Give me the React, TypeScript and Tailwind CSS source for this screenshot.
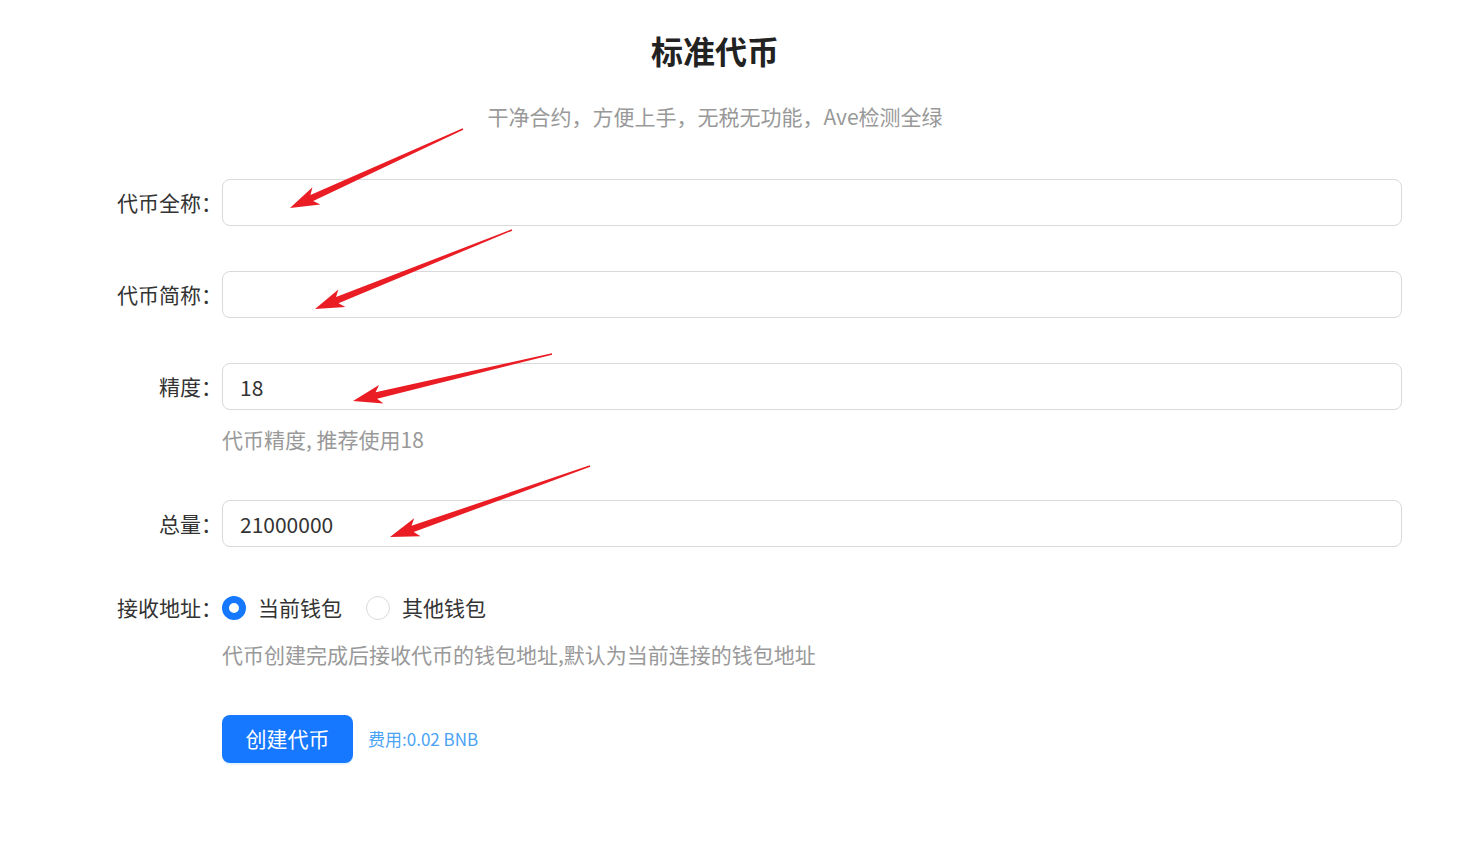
import React, { useState } from "react";

const font = { fontFamily: '"Noto Sans CJK SC", "Noto Sans", sans-serif' };

type Pt = [number, number];

function arrowPoints(tail: Pt, tip: Pt) {
  const dx = tip[0] - tail[0];
  const dy = tip[1] - tail[1];
  const len = Math.hypot(dx, dy);
  const ux = dx / len;
  const uy = dy / len;
  const nx = -uy;
  const ny = ux;
  const head = 24;
  const neck: Pt = [tip[0] - ux * head, tip[1] - uy * head];
  const barb: Pt = [tip[0] - ux * (head + 5), tip[1] - uy * (head + 5)];
  const p = (base: Pt, w: number): string => `${base[0] + nx * w},${base[1] + ny * w}`;
  return [
    p(tail, 0.7),
    p(neck, 3.3),
    p(barb, 9.5),
    `${tip[0]},${tip[1]}`,
    p(barb, -9.5),
    p(neck, -3.3),
    p(tail, -0.7),
  ].join(" ");
}

const arrows: [Pt, Pt][] = [
  [[463, 129], [290, 208]],
  [[512, 230], [315, 309]],
  [[552, 354], [353, 401]],
  [[590, 466], [390, 537]],
];

function Field({ label, value, children }: { label: string; value?: string; children?: React.ReactNode }) {
  return (
    <div className="flex flex-col">
      <div className="flex items-center">
        <label className="w-[222px] shrink-0 text-right text-[21px] text-[#333]">{label}：</label>
        <input
          defaultValue={value}
          className="h-[47px] w-[1180px] rounded-[8px] border border-[#d9d9d9] bg-white px-[17px] text-[21px] text-[#333] outline-none"
          style={font}
        />
      </div>
      {children}
    </div>
  );
}

function Radio({ checked }: { checked: boolean }) {
  return (
    <span
      className={
        checked
          ? "h-[24px] w-[24px] rounded-full border-[7px] border-[#1677ff] bg-white"
          : "h-[24px] w-[24px] rounded-full border border-[#d9d9d9] bg-white"
      }
    />
  );
}

export default function App() {
  const [receiver, setReceiver] = useState("current");

  return (
    <div className="relative min-h-[849px] w-[1473px] bg-white" style={font}>
      <div className="w-[1430px] pt-[28px] text-center">
        <h1 className="text-[32px] font-bold leading-[44px] text-[#222]">标准代币</h1>
        <p className="mt-[30px] text-[21px] leading-[28px] text-[#999]">干净合约，方便上手，无税无功能，Ave检测全绿</p>
      </div>

      <form className="mt-[49px] flex flex-col gap-[45px]" onSubmit={(e) => e.preventDefault()}>
        <Field label="代币全称" />
        <Field label="代币简称" />
        <Field label="精度" value="18">
          <div className="mb-[2px] ml-[222px] mt-[15px] text-[21px] leading-[28px] text-[#999]">代币精度, 推荐使用18</div>
        </Field>
        <Field label="总量" value="21000000" />

        <div className="flex flex-col">
          <div className="flex h-[32px] items-center">
            <span className="w-[222px] shrink-0 text-right text-[21px] text-[#333]">接收地址：</span>
            <button type="button" onClick={() => setReceiver("current")} className="flex items-center gap-[12px]">
              <Radio checked={receiver === "current"} />
              <span className="text-[21px] text-[#333]">当前钱包</span>
            </button>
            <button type="button" onClick={() => setReceiver("other")} className="ml-[24px] flex items-center gap-[12px]">
              <Radio checked={receiver === "other"} />
              <span className="text-[21px] text-[#333]">其他钱包</span>
            </button>
          </div>
          <div className="ml-[222px] mt-[16px] text-[21px] leading-[28px] text-[#999]">
            代币创建完成后接收代币的钱包地址,默认为当前连接的钱包地址
          </div>
        </div>

        <div className="ml-[222px] mt-[2px] flex items-center gap-[15px]">
          <button
            type="submit"
            className="h-[48px] w-[131px] rounded-[8px] bg-[#1677ff] text-[21px] text-white shadow-[0_2px_0_rgba(5,145,255,0.1)]"
          >
            创建代币
          </button>
          <span className="text-[17px] text-[#4ba3f5]">费用:0.02 BNB</span>
        </div>
      </form>

      <svg className="pointer-events-none absolute left-0 top-0" width="1473" height="849">
        {arrows.map(([tail, tip], i) => (
          <polygon key={i} points={arrowPoints(tail, tip)} fill="#ea1d25" />
        ))}
      </svg>
    </div>
  );
}
